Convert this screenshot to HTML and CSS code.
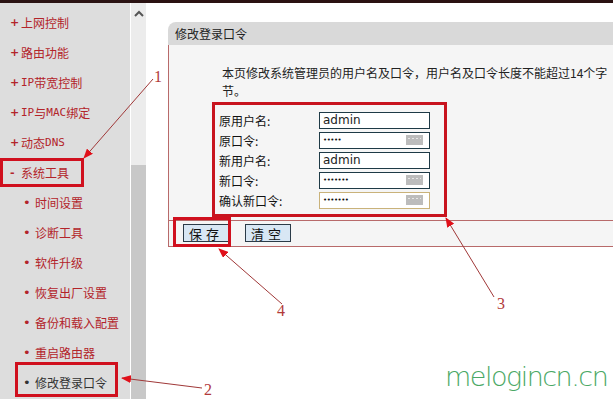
FILE: index.html
```html
<!DOCTYPE html>
<html lang="zh-CN">
<head>
    <meta charset="utf-8">
    <title>修改登录口令</title>
    <link rel="stylesheet" href="styles.css">
</head>
<body>
<div class="page">

    <div class="topbar"></div>

    <div class="frame">

        <ul class="menu">
            <li class="item"><span class="mark">+</span>上网控制</li>
            <li class="item"><span class="mark">+</span>路由功能</li>
            <li class="item"><span class="mark">+</span><span class="latin">IP</span>带宽控制</li>
            <li class="item"><span class="mark">+</span><span class="latin">IP</span>与<span class="latin">MAC</span>绑定</li>
            <li class="item"><span class="mark">+</span>动态<span class="latin">DNS</span></li>
            <li class="item"><span class="mark">-</span>系统工具</li>
            <li class="item sub"><span class="dot">•</span>时间设置</li>
            <li class="item sub"><span class="dot">•</span>诊断工具</li>
            <li class="item sub"><span class="dot">•</span>软件升级</li>
            <li class="item sub"><span class="dot">•</span>恢复出厂设置</li>
            <li class="item sub"><span class="dot">•</span>备份和载入配置</li>
            <li class="item sub"><span class="dot">•</span>重启路由器</li>
            <li class="item sub current"><span class="dot">•</span>修改登录口令</li>
        </ul>

        <div class="scroll">
            <div class="scroll-track">
                <svg width="10" height="7" viewBox="0 0 10 7"><path d="M1 6 L5 2 L9 6" fill="none" stroke="#555" stroke-width="2"/></svg>
            </div>
            <div class="scroll-thumb"></div>
        </div>

        <div class="main">
            <div class="panel">
                <div class="panel-head">修改登录口令</div>
                <div class="panel-body">
                    <div class="panel-form">
                        <p class="desc">本页修改系统管理员的用户名及口令，用户名及口令长度不能超过14个字节。</p>
                        <div class="fields">
                            <div class="row"><span class="label">原用户名:</span><div class="field">admin</div></div>
                            <div class="row"><span class="label">原口令:</span><div class="field secret"><span class="dots">•••••</span><span class="kbd"></span></div></div>
                            <div class="row"><span class="label">新用户名:</span><div class="field">admin</div></div>
                            <div class="row"><span class="label">新口令:</span><div class="field secret"><span class="dots">•••••••</span><span class="kbd"></span></div></div>
                            <div class="row"><span class="label">确认新口令:</span><div class="field secret focus"><span class="dots">•••••••</span><span class="kbd"></span></div></div>
                        </div>
                    </div>
                    <div class="panel-actions">
                        <button class="btn">保存</button>
                        <button class="btn">清空</button>
                    </div>
                </div>
            </div>
        </div>

    </div>

    <!-- red annotation marks drawn over the screenshot -->
    <svg class="marks" width="613" height="399" viewBox="0 0 613 399">
        <defs>
            <marker id="tip" markerWidth="10" markerHeight="8" refX="9" refY="4" orient="auto" markerUnits="userSpaceOnUse">
                <path d="M0 0 L10 4 L0 8 Z" fill="#e0101a"/>
            </marker>
        </defs>
        <rect x="1.5" y="159.5" width="81" height="26" fill="none" stroke="#d0101e" stroke-width="3"/>
        <rect x="16.5" y="363.5" width="100" height="32" fill="none" stroke="#d0101e" stroke-width="3"/>
        <rect x="174.5" y="218.5" width="55" height="27" fill="none" stroke="#d0101e" stroke-width="3"/>

        <line x1="153" y1="79" x2="84" y2="158" stroke="#a03838" stroke-width="1" marker-end="url(#tip)"/>
        <line x1="202" y1="388" x2="122" y2="378" stroke="#a03838" stroke-width="1" marker-end="url(#tip)"/>
        <line x1="494" y1="297" x2="446" y2="218" stroke="#a03838" stroke-width="1" marker-end="url(#tip)"/>
        <line x1="282" y1="304" x2="219" y2="249" stroke="#a03838" stroke-width="1" marker-end="url(#tip)"/>

        <text class="num" x="154" y="82">1</text>
        <text class="num" x="204" y="395">2</text>
        <text class="num" x="497" y="309">3</text>
        <text class="num" x="277" y="316">4</text>
    </svg>

    <div class="watermark">melogincn.cn</div>

</div>
</body>
</html>
```

FILE: styles.css
```css
html, body
{
    margin:           0;
    padding:          0;
    background-color: #ffffff;
}

.page
{
    position:         relative;
    width:            613px;
    height:           399px;
    overflow:         hidden;
    font-family:      "Noto Sans CJK SC", "DejaVu Sans", sans-serif;
    font-size:        12px;
    color:            #222222;
}

.topbar
{
    height:           3px;
    background-color: #2a1212;
}

.frame
{
    display:          flex;
    height:           396px;
}

/* Left menu */

.menu
{
    list-style:       none;
    margin:           0;
    padding:          4px 0 0 0;
    width:            130px;
    flex:             none;
    background-color: #dddddd;
}

.item
{
    display:          flex;
    align-items:      center;
    height:           30px;
    padding-left:     10px;
    color:            #b3242a;
    white-space:      nowrap;
}

.item .mark
{
    width:            11px;
    font-weight:      bold;
    font-family:      "DejaVu Sans", sans-serif;
    font-size:        11px;
}

.item .latin
{
    font-family:      "DejaVu Sans Mono", monospace;
    font-size:        11px;
}

.item.sub
{
    padding-left:     23px;
}

.item .dot
{
    width:            12px;
    font-family:      "DejaVu Sans", sans-serif;
    font-size:        13px;
}

.item.current
{
    color:            #333333;
}

/* Scroll bar beside the menu */

.scroll
{
    display:          flex;
    flex-direction:   column;
    width:            15px;
    margin-left:      1px;
    flex:             none;
}

.scroll-track
{
    height:           162px;
    background-color: #ececec;
    display:          flex;
    justify-content:  center;
    padding-top:      7px;
    box-sizing:       border-box;
}

.scroll-thumb
{
    flex:             1;
    background-color: #c8c8c8;
}

/* Right content */

.main
{
    flex:             1;
    min-width:        0;
    padding:          19px 0 0 22px;
}

.panel
{
    width:            460px;
}

.panel-head
{
    height:           23px;
    line-height:      23px;
    padding-left:     7px;
    background-color: #d9d9d9;
    border-top-left-radius: 8px;
    color:            #222222;
}

.panel-body
{
    border-left:      1px solid #b86a6a;
    border-bottom:    1px solid #b86a6a;
    background-color: #f5f5f5;
}

.panel-form
{
    padding:          19px 0 3px 43px;
    border-bottom:    1px solid #b86a6a;
}

.desc
{
    margin:           0 0 2px 10px;
    width:            390px;
    line-height:      18px;
    color:            #222222;
}

.fields
{
    padding:          5px 14px 4px 4px;
    border:           3px solid #c8141e;
    box-sizing:       content-box;
    width:            211px;
}

.row
{
    display:          flex;
    align-items:      center;
    height:           20px;
}

.label
{
    width:            100px;
    color:            #111111;
}

.field
{
    display:          flex;
    align-items:      center;
    width:            111px;
    height:           17px;
    box-sizing:       border-box;
    padding-left:     3px;
    border:           1px solid #1e3a46;
    background-color: #ffffff;
    font-family:      "DejaVu Sans", sans-serif;
    font-size:        12px;
    color:            #222222;
}

.field.focus
{
    border-color:     #c9b27a;
}

.dots
{
    flex:             1;
    font-size:        7px;
    letter-spacing:   -0.5px;
    color:            #111111;
}

.kbd
{
    width:            17px;
    height:           10px;
    margin-right:     6px;
    background-color: #bcbcbc;
    background-image: repeating-linear-gradient(90deg, #e6e6e6 0 2px, transparent 2px 4px);
    background-size:  13px 1px;
    background-repeat: no-repeat;
    background-position: 2px 3px;
}

.panel-actions
{
    display:          flex;
    gap:              16px;
    height:           25px;
    padding:          3px 0 0 14px;
    box-sizing:       border-box;
}

.btn
{
    height:           18px;
    padding:          0 5px;
    border:           1px solid #2b3b48;
    background-color: #d8e7f4;
    font-family:      "Noto Sans CJK SC", sans-serif;
    font-size:        13px;
    line-height:      15px;
    letter-spacing:   4px;
    color:            #111111;
}

/* Annotations and watermark */

.marks
{
    position:         absolute;
    top:              0;
    left:             0;
    pointer-events:   none;
}

.num
{
    font-family:      "Liberation Serif", serif;
    font-size:        16px;
    fill:             #b23a3a;
}

.watermark
{
    position:         absolute;
    left:             445px;
    top:              361px;
    font-family:      "DejaVu Sans", sans-serif;
    font-weight:      200;
    font-size:        27px;
    letter-spacing:   -1.5px;
    color:            #4aa865;
}
```
